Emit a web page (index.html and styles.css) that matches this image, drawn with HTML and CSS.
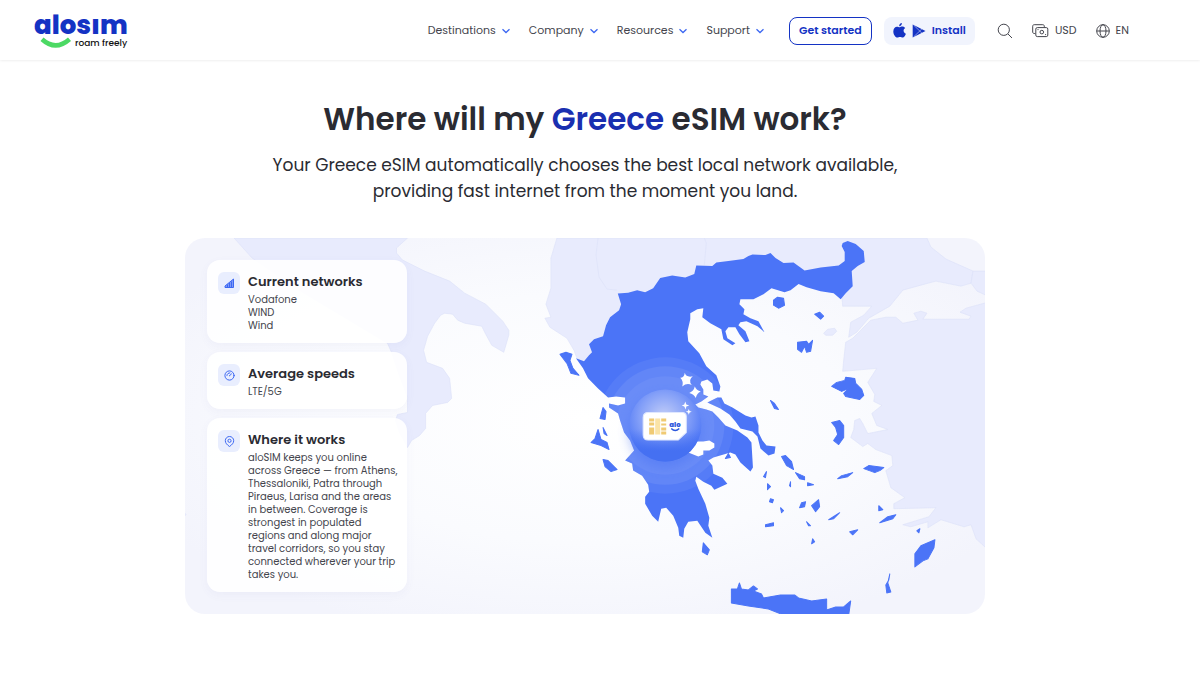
FILE: index.html
```html
<!DOCTYPE html>
<html lang="en">
<head>
  <meta charset="UTF-8">
  <meta name="viewport" content="width=device-width, initial-scale=1.0">
  <title>Greece eSIM | aloSIM</title>
  <link rel="stylesheet" href="styles.css">
</head>
<body>
  <header class="header">
    <a href="/" class="logo">
      <span class="logo-name">alosım</span>
      <span class="logo-tag">
        <svg width="32" height="12" viewBox="0 0 32 12" fill="none" stroke="#4cd964" stroke-width="4.6"><path d="M2 2.2Q15.500 14.500 29.500 2.200"/></svg>
        roam freely
      </span>
    </a>

    <div class="header-right">
      <nav class="nav">
        <button type="button" class="nav-item">Destinations <svg class="chevron" viewBox="0 0 10 6"><path d="M1.500 1.200 5 4.500l3.500-3.300"/></svg></button>
        <button type="button" class="nav-item">Company <svg class="chevron" viewBox="0 0 10 6"><path d="M1.500 1.200 5 4.500l3.500-3.300"/></svg></button>
        <button type="button" class="nav-item">Resources <svg class="chevron" viewBox="0 0 10 6"><path d="M1.500 1.200 5 4.500l3.500-3.300"/></svg></button>
        <button type="button" class="nav-item">Support <svg class="chevron" viewBox="0 0 10 6"><path d="M1.500 1.200 5 4.500l3.500-3.300"/></svg></button>
      </nav>

      <div class="actions">
        <a href="/get-started" class="btn btn-outline">Get started</a>
        <a href="/install" class="btn btn-soft">
          <svg width="13" height="15" viewBox="0 0 13 15" fill="#1433c4"><path d="M8.900 0c.1 1.800-1.200 3.200-2.700 3.200C6 1.600 7.400.2 8.900 0zM6.600 4.300c.8 0 1.500-.7 2.700-.7 1.200 0 2.300.6 2.900 1.500-2.400 1.500-2 4.600.7 5.600-.5 1.600-1.800 3.800-3.200 3.800-1 0-1.500-.6-2.700-.6s-1.700.6-2.700.6C2.400 14.500.3 11.200.3 8.400c0-3 1.800-4.700 3.700-4.700 1.100 0 1.900.6 2.600.6z"/></svg>
          <svg width="14" height="14" viewBox="0 0 14 14"><path fill="#1433c4" d="M.7.5 13.500 7 .7 13.500z"/><path fill="none" stroke="#f1f4fd" stroke-width=".5" d="M1.500 1 10 9.200M1.500 13 10 4.800"/></svg>
          Install
        </a>
      </div>

      <div class="tools">
        <button type="button" class="tool" aria-label="Search">
          <svg width="16" height="16" viewBox="0 0 16 16" class="line-icon"><circle cx="6.800" cy="6.800" r="5.600"/><path d="m11 11 4 4"/></svg>
        </button>
        <button type="button" class="tool">
          <svg width="17" height="14" viewBox="0 0 17 14" class="line-icon"><path d="M3.300 9.500H2.200C1.300 9.500.7 8.900.7 8V2.200C.7 1.300 1.300.7 2.200.7h8.600c.9 0 1.500.6 1.500 1.500v1.200"/><rect x="3.800" y="3.600" width="12" height="9" rx="1.500"/><circle cx="9.800" cy="8.100" r="1.800"/><path d="M5.500 5.600h1M13.100 10.600h1"/></svg>
          USD
        </button>
        <button type="button" class="tool">
          <svg width="14" height="14" viewBox="0 0 14 14" class="line-icon"><circle cx="7" cy="7" r="6.300"/><ellipse cx="7" cy="7" rx="3" ry="6.300"/><path d="M.7 7h12.600"/></svg>
          EN
        </button>
      </div>
    </div>
  </header>

  <main class="coverage">
    <h1 class="title">Where will my <span class="title-accent">Greece</span> eSIM work?</h1>
    <p class="lead">Your Greece eSIM automatically chooses the best local network available, providing fast internet from the moment you land.</p>

    <section class="map-card">
      <svg class="map" viewBox="185 238 800 375" preserveAspectRatio="xMidYMid slice" aria-hidden="true">
        <defs>
          <radialGradient id="sea" cx="0.500" cy="0.480" r="0.600">
            <stop offset="0" stop-color="#ffffff"/>
            <stop offset="0.550" stop-color="#fafbfe"/>
            <stop offset="1" stop-color="#f3f4fc"/>
          </radialGradient>
          <radialGradient id="ball" cx="0.480" cy="0.380" r="0.620">
            <stop offset="0" stop-color="#c3cef8"/>
            <stop offset="0.550" stop-color="#839ff8"/>
            <stop offset="1" stop-color="#4872f5"/>
          </radialGradient>
          <linearGradient id="ball-base" x1="0" y1="0" x2="0" y2="1">
            <stop offset="0.550" stop-color="#4570f2" stop-opacity="0"/>
            <stop offset="0.850" stop-color="#4570f2"/>
          </linearGradient>
          <filter id="glow" x="-50%" y="-50%" width="200%" height="200%"><feGaussianBlur stdDeviation="6"/></filter>
          <clipPath id="greece-clip"><use href="#mainland"/><use href="#euboea"/></clipPath>
        </defs>
        <rect x="185" y="238" width="800" height="375" fill="url(#sea)"/>

        <!-- neighbouring countries -->
        <g class="land">
          <path d="M235 238 253 258 300 290 350 320 388 343 392 352 398 370 408 397V412L398 414 396 420 400 432 408 447 412 440 420 435 426 428V413L433 405 448 402 452 398 450 378 443 368 427 362 424 350 428 336 435 323 441 315 445 313 453 314 458 320 465 323 482 326 486 334 492 345 504 352 509 335 509 330 503 321 486 304 465 293 450 281 425 271 403 260 397 253V248L408 238Z"/>
          <path d="M557 238 554 248 551 258V288L546 304 551 317 545 318 550 327 567 338 574 350 577 358 584 362 630 370 680 310 740 285 790 275 841 294 842 306 871 306 863 315 850 322 848 337 856 332 868 318 889 306 902 290 920 285 935 281 960 286 970 283 972 271 945 259 930 247 926 238Z"/>
          <path d="M987 271H972L970 283 976 291 987 296Z"/>
          <path d="M987 302 965 308 959 312 970 316 968 319 922 319 926 313 920 311 913 313 917 320 902 323 895 317 885 317 870 320 852 338 845 342 843 360 842 371 876 368 867 382 874 394 873 401 881 405 871 413 876 425 887 429 867 433 862 423 859 418 854 420 853 429 850 437 862 446 867 443 875 449 891 455 892 465 885 470 890 487 904 497 893 503V508L935 507 928 516 902 524 910 526 927 521V527L940 519 963 526 970 524 975 538 987 549Z"/>
          <path d="M823 333 827 329 834 328 836 331 832 335 825 335Z"/>
          <path d="M185 511 187 514 185 516Z"/>
          <path class="border" d="M598 238 596 255 599 277 607 289 617 290M704 238 706 243 704 265"/>
        </g>

        <g class="greece">
          <path id="mainland" d="M617.700 293.300 628 292.500 637 290 645 292 653 288 660 278 672 275.500 685 277.500 694 274 696 265.500 712 266 716 262.500 728 261 743 259 748 256 752 254.500 765 255 770 253 775 258 783 263 793 262.500 804 270.500 820 267.500 838 265.500 844 261V252L841 246 842 243 847 241 855 244 863 251 864 262 857 266 851 271 852 286 845 293 840 299 833 293 820 291 806 287 798 284 790 290 784 292 771 288 763 294 753 299 740 299 739 304 744 309 743 314 750 318 758 321 764 332 757 326 746 321 740 322 738 325 745 331 749 341 745 342 739 334 735 327 728 327 725 331 727 338 735 343 732 345 723 339 721 329 710 323 702 317 703 308 697 309 690 313V319L687 332 688 341 699 353 706 366 716 375 720 386 719 391 713 390 712 383 707 379 701 381 700 384 703 389 703 394 708 396 701 401 695 404 698 407 706 409 712 411 718 417 725 425 737 430 747 437 751 442 752.500 467 750 471 740 462 735 454 730 452 713 457 708 460 712 465 713 473 722 477 727 483 714 489 711 485 703 481 696 476 695 480 698 488 705 503 709 517 708 525 712 537 705 532 697 520 688 521 684 528 683 537 679 535 678 527 673 515 666 507 661 508 658 521 652 515 645 503V496L649 491 648 484 642 475 633 470 632 463 625 460 634 450 630 440 624 432 620 420 618 413 609 407V403L618 405 625 403V397L616 396 608 397 598 388 588 378 583 368 576 358 584 361 589 355 592 352 589 344 594 339 603 336 606 325 610 317 619 310 621 304Z"/>
          <path id="euboea" d="M707 402 717 397 721 397 724 403 732 407 745 415 751 417 755 416 758 425 758 432 762 440 766 445 775 446 774 453 768 455 760 448 757 436 752 431 740 428 735 421 729 414 720 408Z"/>
          <g class="islands">
            <path d="M560 354 566 352 572 354 570 360 573 368 579 375 571 373 567 363Z"/>
            <path d="M603 407 606 411 605 419 600 418ZM603 427 607 435 604 433ZM598 429 601 439 607 442 609 449 601 445 591 442 595 438ZM603 459 608 460 617 469 611 471 605 466ZM703 542 709 549 707 554 702 551ZM725 458 728 453 730 457Z"/>
            <path d="M773 300 777 297 783 298 784 305 778 308 773 305ZM814 314 819 312 823 316 820 319ZM797 342 806 341 808 344 812 340 810 351 806 352 804 346 801 352 797 349ZM770 400 774 403 778 409 774 408Z"/>
            <path d="M831 386 836 382 844 380 845 377 854 378 855 383 861 389 863 395 859 399 845 396 843 393 848 388 841 391Z"/>
            <path d="M831 422 839 420 843 425 843 437 838 444 833 440 837 434 835 427ZM863 468 868 465 883 467 879 470 874 472ZM837 478 841 475 852 472 847 476Z"/>
            <path d="M781 456 785 455 791 461 793 469 786 465ZM795 472 804 476 804 479 799 478ZM807 482 813 484 807 485ZM763 476 766 471 765 477ZM767 483 770 486 767 489ZM770 498 773 499 772 502 769 501ZM780 507 783 510 781 512ZM790 481V486L789 485ZM799 507 801 502 805 501 804 506ZM811 505 818 499 819 506 815 511ZM765 524 773 522 773 525 765 526ZM806 521 810 525 808 525ZM812 538 814 541 811 543ZM828 519 839 512 833 518ZM849 531 857 529 852 534ZM878 505 882 509 878 510ZM879 522 887 516 895 514 892 518ZM916 530 919 528 918 532Z"/>
            <path d="M914 553 920 545 934 539 933 547 927 558 922 560 914 566ZM889 573 887 582 890 591 886 592 885 584 888 579Z"/>
            <path d="M731 588 737 588 739 582 741 588 748 589 753 585 757 588 753 590 761 593 763 597 780 594 794 594 798 597 811 600 826 598 826 609 835 606 843 606 850 600 848 614H783L768 608 748 605 731 602Z"/>
          </g>
        </g>

        <!-- signal rings -->
        <g clip-path="url(#greece-clip)" fill="#fff">
          <circle cx="665" cy="425" r="68" opacity=".06"/>
          <circle cx="665" cy="425" r="59" opacity=".08"/>
          <circle cx="665" cy="425" r="49" opacity=".05"/>
        </g>
        <circle cx="665" cy="431" r="36" fill="#4671f3" opacity=".45" filter="url(#glow)"/>
        <path fill="#fff" d="M688 444 697 441 703 441 709 440 714 443 714 447 709 450 703 450 703 454 698 456 688 452Z"/>
        <circle cx="665" cy="425" r="36" fill="url(#ball)"/>
        <circle cx="665" cy="425" r="36" fill="url(#ball-base)"/>

        <!-- sim card -->
        <path d="M648 412h34q4 0 4 4v16l-8 7.500h-30q-5 0-5-5V417q0-5 5-5z" fill="#fff" stroke="#dfe7ff"/>
        <g fill="#f0ca73">
          <rect x="649" y="418" width="5" height="3"/><rect x="649" y="422" width="5" height="3"/><rect x="649" y="427" width="5" height="7"/>
          <rect x="661" y="418" width="5" height="3"/><rect x="661" y="423" width="5" height="2"/><rect x="661" y="427" width="5" height="3"/><rect x="661" y="431" width="5" height="3"/>
          <rect x="655" y="418" width="5" height="16" fill="#fae3a6"/>
        </g>
        <text class="sim-text" x="669" y="427">alo</text>
        <path d="M671 428q4 4 8 0" fill="none" stroke="#2c57dc" stroke-width="1.500"/>
        <g fill="#fff">
          <path d="M684.500 372.500Q686 377.500 692.500 376 687.500 380 691.500 384.500 686.500 382 682 386 683.500 381 680 377.500 684 377.500 684.500 372.500Z"/>
          <path d="M694.500 386Q696 390 700.500 391 696.500 392.500 695.500 397.500 693.500 393.500 689 392.500 693.500 390.500 694.500 386Z"/>
          <path d="M685 401 686 404 689 405 686 406 685.500 409 684 406 681.500 405 684 404Z"/>
          <path d="M688.500 408.500 689.300 410.500 691.500 411.300 689.300 412 688.500 414.200 687.700 412 685.500 411.300 687.700 410.500Z"/>
        </g>
      </svg>

      <div class="info-list">
        <article class="info">
          <span class="info-icon">
            <svg width="11" height="11" viewBox="0 0 11 11" fill="#7e9af8" stroke="#3d68f2"><path d="M1 9.500V8l8.500-7v8.500zM3.500 6.500v3M5.500 5v4.500M7.500 3.500v6"/></svg>
          </span>
          <div>
            <h2 class="info-title">Current networks</h2>
            <ul class="info-text networks">
              <li>Vodafone</li>
              <li>WIND</li>
              <li>Wind</li>
            </ul>
          </div>
        </article>

        <article class="info">
          <span class="info-icon">
            <svg width="11" height="11" viewBox="0 0 11 11" fill="none" stroke="#3d68f2" stroke-linecap="round"><circle cx="5.500" cy="5.500" r="4.600"/><path d="M2.900 5.500a2.600 2.600 0 0 1 3-2.600M5.300 5.900 7.500 3.900"/></svg>
          </span>
          <div>
            <h2 class="info-title">Average speeds</h2>
            <p class="info-text">LTE/5G</p>
          </div>
        </article>

        <article class="info">
          <span class="info-icon">
            <svg width="11" height="11" viewBox="0 0 11 11" fill="none" stroke="#3d68f2"><path d="M5.500 10.500C3 8.800 1.300 7 1.300 4.700a4.200 4.200 0 0 1 8.400 0C9.700 7 8 8.800 5.500 10.500z"/><circle cx="5.500" cy="4.800" r="1.600"/></svg>
          </span>
          <div>
            <h2 class="info-title">Where it works</h2>
            <p class="info-text">aloSIM keeps you online across Greece — from Athens, Thessaloniki, Patra through Piraeus, Larisa and the areas in between. Coverage is strongest in populated regions and along major travel corridors, so you stay connected wherever your trip takes you.</p>
          </div>
        </article>
      </div>
    </section>
  </main>
</body>
</html>
```

FILE: styles.css
```css
* {
  box-sizing: border-box;
}
body {
  margin: 0;
  font-family: Poppins, Inter, sans-serif;
  background-color: #fff;
  color: #2a2b32;
}
h1, h2, p, ul {
  margin: 0;
  padding: 0;
}
a {
  color: inherit;
  text-decoration: none;
}
button {
  padding: 0;
  border: 0;
  background: none;
  font: inherit;
  color: inherit;
  cursor: pointer;
}
svg {
  flex-shrink: 0;
}

/* Header */
.header {
  display: flex;
  justify-content: space-between;
  align-items: center;
  height: 60px;
  padding: 1px 71px 0 34px;
  box-shadow: 0 0 3px rgba(0, 0, 0, 0.12);
}
.logo {
  display: flex;
  flex-direction: column;
}
.logo-name {
  font-size: 26px;
  font-weight: 800;
  line-height: 24px;
  color: #1433c4;
}
.logo-tag {
  display: flex;
  align-items: center;
  gap: 3px;
  padding-left: 6px;
  font-size: 9px;
  font-weight: 500;
  line-height: 12px;
  color: #111;
}
.header-right {
  display: flex;
  align-items: center;
  font-size: 11px;
  color: #44454d;
}
.nav {
  display: flex;
  gap: 18px;
}
.nav-item {
  display: flex;
  align-items: center;
  gap: 5px;
}
.chevron {
  width: 10px;
  height: 6px;
  fill: none;
  stroke: #3d68f2;
  stroke-width: 1.3;
}
.actions {
  display: flex;
  gap: 12px;
  margin: 0 22px 0 24px;
}
.btn {
  display: flex;
  align-items: center;
  gap: 6px;
  height: 28px;
  border-radius: 8px;
  font-weight: 600;
  color: #1433c4;
}
.btn-outline {
  padding: 0 9px;
  border: 1px solid #1433c4;
}
.btn-soft {
  padding: 0 9px;
  background-color: #f1f4fd;
}
.tools {
  display: flex;
  gap: 19px;
}
.tool {
  display: flex;
  align-items: center;
  gap: 6px;
}
.line-icon {
  fill: none;
  stroke: #44454d;
}

/* Coverage */
.coverage {
  padding: 36px 30px 62px 0;
  text-align: center;
}
.title {
  font-size: 31px;
  font-weight: 600;
  line-height: 46px;
}
.title-accent {
  color: #1a2fb0;
}
.lead {
  max-width: 660px;
  margin: 10px auto 34px;
  font-size: 17px;
  line-height: 26px;
}
.map-card {
  position: relative;
  max-width: 800px;
  margin: 0 auto;
  padding: 22px;
  overflow: hidden;
  border-radius: 20px;
  text-align: left;
}
.map {
  position: absolute;
  inset: 0;
  width: 100%;
  height: 100%;
}
.land {
  fill: #e8ebfd;
  stroke: #dce1f8;
  stroke-width: 0.6;
  stroke-linejoin: round;
}
.border {
  fill: none;
}
.greece {
  fill: #4b74f7;
}
.islands {
  stroke: #4b74f7;
  stroke-width: 1;
  stroke-linejoin: round;
}
.sim-text {
  font-size: 7px;
  font-weight: 800;
  fill: #2c57dc;
}
.info-list {
  position: relative;
  display: flex;
  flex-direction: column;
  gap: 9px;
  width: 200px;
}
.info {
  display: flex;
  gap: 8px;
  padding: 12px 6px 11px 11px;
  border-radius: 13px;
  background-color: rgba(255, 255, 255, 0.9);
  box-shadow: 0 3px 10px rgba(90, 100, 180, 0.05);
}
.info-icon {
  display: flex;
  flex-shrink: 0;
  justify-content: center;
  align-items: center;
  width: 22px;
  height: 22px;
  border-radius: 6px;
  background-color: #e9eefe;
}
.info-title {
  margin-bottom: 2px;
  font-size: 13px;
  font-weight: 600;
  line-height: 19px;
}
.info-text {
  font-size: 10px;
  line-height: 13px;
  color: #44454d;
}
.networks {
  list-style: none;
}
```
